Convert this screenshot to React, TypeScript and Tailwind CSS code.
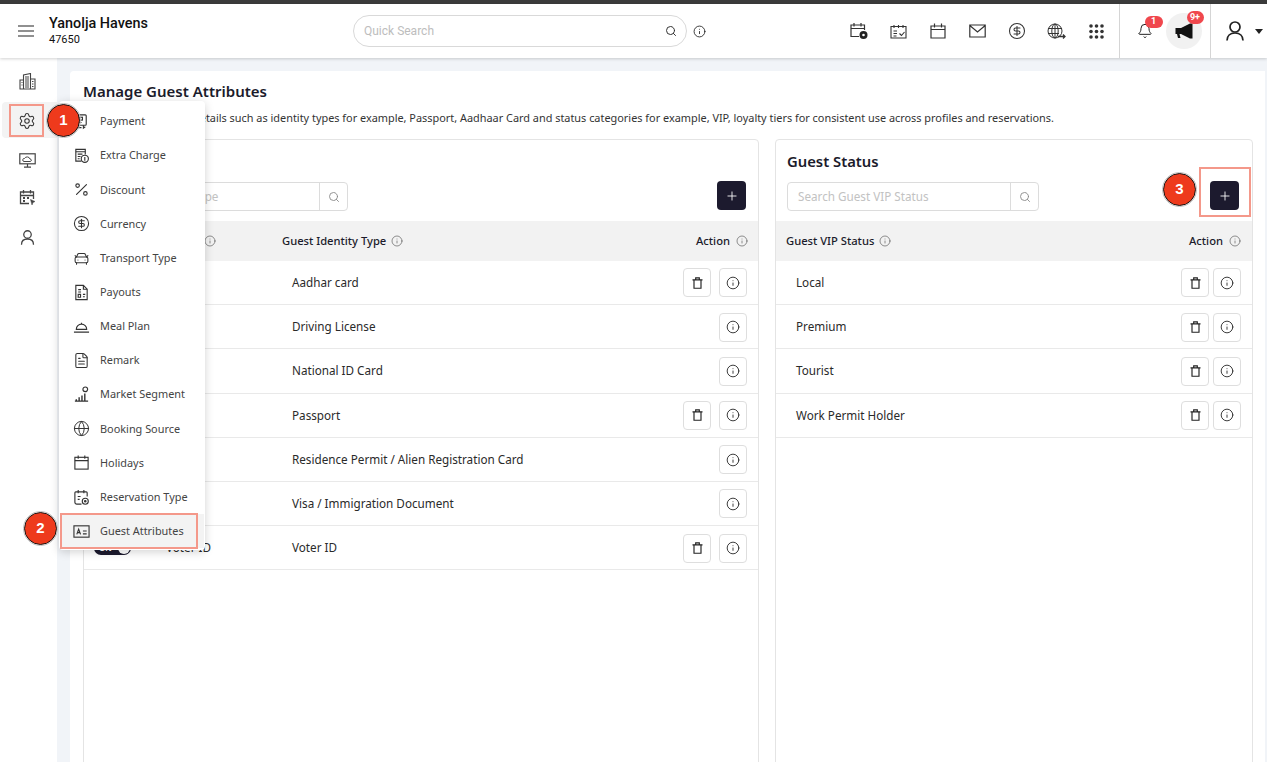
import { Search, Info, Plus, Percent, CircleDollarSign, CarFront, Globe, FileText, Settings, Bell } from "lucide-react";
import { ReactNode } from "react";

type IconProps = { size?: number };

function Svg({ size = 17, children }: IconProps & { children: ReactNode }) {
  return (
    <svg width={size} height={size} viewBox="0 0 18 18" fill="none" stroke="currentColor" strokeWidth="1.2">
      {children}
    </svg>
  );
}

const BurgerIcon = () => (
  <svg width="16" height="12" viewBox="0 0 16 12" fill="none" stroke="currentColor" strokeWidth="1.200">
    <path d="M0 1h16M0 6h16M0 11h16" />
  </svg>
);
const PaymentIcon = () => (
  <Svg>
    <rect x="4" y="2" width="10" height="11" rx="1" />
    <rect x="6.5" y="4.5" width="3.5" height="3" />
    <path d="M6 10h3M4 15.5h5M11 13v3l2-1.5" />
  </Svg>
);
const ChargeIcon = () => (
  <Svg>
    <path d="M9 15H3V2.5h10V8" />
    <path d="M3 5h10M5 7.5h5M5 10h3M5 12.5h2" />
    <circle cx="12.5" cy="12.5" r="3.8" />
    <path d="M12.5 10.5v4" />
  </Svg>
);
const PayoutsIcon = () => (
  <Svg>
    <path d="M3 1.5h8l4 4v11H3z" />
    <path d="M11 1.5v4h4M5.5 6h3M5.5 8.5h3M5.5 11h2.5v3h-2.500zM10.500 11h2.500M10.500 13.500h2" />
  </Svg>
);
const MealIcon = () => (
  <Svg>
    <path d="M3.500 12a5.500 5.500 0 0 1 11 0zM1 15h16M9 6.500V5" />
  </Svg>
);
const MarketIcon = () => (
  <Svg>
    <path d="M2 16h14M3.500 16v-2M6.500 16v-4M9.500 16v-6M12.500 16V8" strokeWidth="1.500" />
    <circle cx="13" cy="3.500" r="2.500" />
  </Svg>
);
const HolidayIcon = () => (
  <Svg>
    <rect x="2" y="3.500" width="14" height="12.500" />
    <path d="M2 7h14M5.500 1.500v3.500M12.500 1.500v3.500" />
  </Svg>
);
const ReservationIcon = () => (
  <Svg>
    <path d="M9 16H4a2 2 0 0 1-2-2V4a1 1 0 0 1 1-1h11a1 1 0 0 1 1 1v4" />
    <path d="M5.500 1v3.500M11.500 1v3.500M5 8h3M5 11h2" />
    <circle cx="13" cy="13" r="3.200" />
    <circle cx="13" cy="13" r="0.800" fill="currentColor" />
  </Svg>
);
const GuestIcon = () => (
  <Svg>
    <rect x="1" y="3" width="16" height="12" />
    <path d="M4 12l2-5.500L8 12M4.800 10.200h2.400M10.500 8.500h4M10.500 11.500h4" />
  </Svg>
);

const BuildingIcon = () => (
  <svg width="17" height="17" viewBox="0 0 17 17" fill="none" stroke="currentColor" strokeWidth="1.100">
    <path d="M4.500 16V2l7-1.500V16M1 16V7h3.500M11.500 6H16v10M0.500 16h16" />
    <path d="M6 4h4M6 6h4M6 8h4M6 10h4M6 12h4M6 14h4M2.500 9.500h1M2.500 12h1M13 8.500h1.500M13 11h1.500M13 13.500h1.500" />
  </svg>
);
const MonitorIcon = () => (
  <svg width="17" height="15" viewBox="0 0 17 15" fill="none" stroke="currentColor" strokeWidth="1.200">
    <rect x="0.800" y="0.800" width="15.400" height="10" />
    <path d="M8.500 11v3M5 14.200h7" />
    <path d="M5 8.500a1.500 1.500 0 0 1 .5-3 3 3 0 0 1 5.500 0.500 1.300 1.300 0 0 1 .5 2.500z" strokeWidth="1" />
  </svg>
);
const CalendarCursorIcon = () => (
  <svg width="17" height="17" viewBox="0 0 17 17" fill="none" stroke="currentColor" strokeWidth="1.300">
    <path d="M10 14.500H1.500V3h13v7M1.500 6.500h13M4.500 1v3.500M11.500 1v3.500" />
    <path d="M4 9h2M8 9h2M4 12h2" strokeWidth="1.800" />
    <path d="M11.500 10.500l4.500 2-2 1-1 2.500z" fill="currentColor" strokeWidth="0.500" />
  </svg>
);
const UserIcon = ({ size = 15 }: IconProps) => (
  <svg width={size} height={size} viewBox="0 0 18 20" fill="none" stroke="currentColor" strokeWidth="1.700">
    <circle cx="9" cy="6" r="5" />
    <path d="M1 19.500c0-4.500 3-7.500 8-7.500s8 3 8 7.500" />
  </svg>
);
const TrashIcon = () => (
  <svg width="11" height="12" viewBox="0 0 11 12" fill="none" stroke="currentColor" strokeWidth="1.150">
    <path d="M2 3.200v8h7v-8M0.500 2.800h10M3.700 2.800V0.900h3.600v1.900" />
  </svg>
);

const CalendarCogIcon = () => (
  <svg width="18" height="18" viewBox="0 0 18 18" fill="none" stroke="currentColor" strokeWidth="1.200">
    <path d="M9 14.500H1V3h13.500v5M1 6.500h13.500M4 1v3.500M11 1v3.500" />
    <circle cx="13.500" cy="13" r="4" fill="#222" stroke="none" />
    <circle cx="13.500" cy="13" r="1.300" fill="#fff" stroke="none" />
  </svg>
);
const CalendarListIcon = () => (
  <svg width="17" height="15" viewBox="0 0 17 15" fill="none" stroke="currentColor" strokeWidth="1.100">
    <path d="M1 2.500h15v11.500H1zM4 1v3M8.500 1v3M13 1v3M3.500 7h3.500M3.500 9.500h3.500M3.500 12h3" />
    <path d="M9.500 9.500l2 2 3-3.500" />
  </svg>
);
const CalendarPlainIcon = () => (
  <svg width="16" height="16" viewBox="0 0 16 16" fill="none" stroke="currentColor" strokeWidth="1.200">
    <path d="M1 3h14v12H1zM1 6.500h14M4.500 0.500v4M11.500 0.500v4" />
  </svg>
);
const MailIcon = () => (
  <svg width="17" height="14" viewBox="0 0 17 14" fill="none" stroke="currentColor" strokeWidth="1.200">
    <path d="M0.800 1h15.400v12H0.800zM0.800 1.500l7.700 6.500 7.700-6.500" />
  </svg>
);
const GlobeArrowIcon = () => (
  <svg width="19" height="16" viewBox="0 0 19 16" fill="none" stroke="currentColor" strokeWidth="1">
    <circle cx="8" cy="8" r="7" />
    <ellipse cx="8" cy="8" rx="3.200" ry="7" />
    <path d="M1 5.500h14M1 10.500h11M8 1v14" />
    <path d="M11 13.500h7M16 11.500l2 2-2 2" strokeWidth="1.300" />
  </svg>
);
const GripIcon = () => (
  <svg width="15" height="15" viewBox="0 0 15 15" fill="currentColor">
    {[2, 7.500, 13].map((y) => [2, 7.500, 13].map((x) => <circle key={`${x}-${y}`} cx={x} cy={y} r="1.800" />))}
  </svg>
);
const HornIcon = () => (
  <svg width="18" height="16" viewBox="0 0 18 16" fill="#111">
    <path d="M0.500 5h5.500l9-4.500h2.500v15H15L6 11H4.500l1 4H3l-1-4H0.500z" />
  </svg>
);

const MENU = [
  { label: "Payment", icon: <PaymentIcon /> },
  { label: "Extra Charge", icon: <ChargeIcon /> },
  { label: "Discount", icon: <Percent size={17} strokeWidth={1.6} /> },
  { label: "Currency", icon: <CircleDollarSign size={17} strokeWidth={1.5} /> },
  { label: "Transport Type", icon: <CarFront size={17} strokeWidth={1.5} /> },
  { label: "Payouts", icon: <PayoutsIcon /> },
  { label: "Meal Plan", icon: <MealIcon /> },
  { label: "Remark", icon: <FileText size={17} strokeWidth={1.5} /> },
  { label: "Market Segment", icon: <MarketIcon /> },
  { label: "Booking Source", icon: <Globe size={17} strokeWidth={1.4} /> },
  { label: "Holidays", icon: <HolidayIcon /> },
  { label: "Reservation Type", icon: <ReservationIcon /> },
  { label: "Guest Attributes", icon: <GuestIcon /> },
];

const IDENTITY = [
  { code: "AC", name: "Aadhar card", del: true },
  { code: "DL", name: "Driving License", del: false },
  { code: "NID", name: "National ID Card", del: false },
  { code: "PP", name: "Passport", del: true },
  { code: "RP", name: "Residence Permit / Alien Registration Card", del: false },
  { code: "Visa", name: "Visa / Immigration Document", del: false },
  { code: "Voter ID", name: "Voter ID", del: true },
];

const STATUS = ["Local", "Premium", "Tourist", "Work Permit Holder"];

function Marker({ n, className }: { n: number; className: string }) {
  return (
    <div className={`absolute z-30 flex h-[33px] w-[33px] items-center justify-center rounded-full border-[1.5px] border-[#111] bg-[#ee3a1c] font-['Liberation_Sans',sans-serif] text-[15px] font-bold text-white outline outline-1 outline-[#c4c4c4] ${className}`}>
      {n}
    </div>
  );
}

function SmallInfo() {
  return <Info size={12} strokeWidth={1.3} className="text-[#555]" />;
}

function IconBtn({ children }: { children: ReactNode }) {
  return (
    <button className="flex h-[29px] w-[28px] items-center justify-center rounded border border-[#dedede] bg-white text-[#222]">
      {children}
    </button>
  );
}

function SearchBox({ placeholder }: { placeholder: string }) {
  return (
    <div className="flex h-[29px] w-[252px] items-center rounded border border-[#dcdcdc] bg-white">
      <span className="flex-1 pl-[10px] text-[11.7px] text-[#c2c2c2]">{placeholder}</span>
      <span className="flex h-full w-[28px] items-center justify-center border-l border-[#dcdcdc] text-[#888]">
        <Search size={12} strokeWidth={1.8} />
      </span>
    </div>
  );
}

function AddBtn() {
  return (
    <button className="-mt-[2px] flex h-[29px] w-[29px] items-center justify-center rounded bg-[#1c1a2e] text-white">
      <Plus size={14} strokeWidth={1.5} />
    </button>
  );
}

export default function App() {
  return (
    <div className="relative h-[762px] w-[1267px] overflow-hidden bg-[#f1f4f8] font-['Noto_Sans',sans-serif]">
      <div className="h-1 bg-[#3b3b3b]" />
      {/* top bar */}
      <header className="relative z-10 flex h-[54px] items-center bg-white font-['Roboto',sans-serif] shadow-[0_1px_3px_rgba(0,0,0,0.18)]">
        <div className="flex w-[353px] items-center pl-[18px] text-[#222]">
          <BurgerIcon />
          <div className="ml-[15px] leading-none">
            <div className="text-[14.4px] font-medium text-[#111]">Yanolja Havens</div>
            <div className="mt-[3px] text-[11px] text-[#111]">47650</div>
          </div>
        </div>
        <div className="flex h-[32px] w-[334px] items-center justify-between rounded-full border border-[#d9d9d9] pl-[10px] pr-[9px]">
          <span className="text-[12px] text-[#bdbdbd]">Quick Search</span>
          <Search size={12} strokeWidth={2} className="text-[#333]" />
        </div>
        <Info size={13} strokeWidth={1.6} className="ml-[6px] text-[#222]" />
        <div className="ml-[133.5px] flex items-center text-[#333]">
          <div className="flex w-[39.5px] justify-center"><CalendarCogIcon /></div>
          <div className="flex w-[39.5px] justify-center"><CalendarListIcon /></div>
          <div className="flex w-[39.5px] justify-center"><CalendarPlainIcon /></div>
          <div className="flex w-[39.5px] justify-center"><MailIcon /></div>
          <div className="flex w-[39.5px] justify-center"><CircleDollarSign size={18} strokeWidth={1.4} /></div>
          <div className="flex w-[39.5px] justify-center"><GlobeArrowIcon /></div>
          <div className="flex w-[39px] justify-center"><GripIcon /></div>
        </div>
        <div className="ml-[3px] flex h-full items-center border-l border-[#d5d5d5] pl-[17px]">
          <div className="relative">
            <Bell size={16} strokeWidth={1.5} className="text-[#222]" />
            <span className="absolute -right-[10px] -top-[7px] flex h-[12px] w-[18px] items-center justify-center rounded-full bg-[#f0474d] text-[9px] font-bold text-white">1</span>
          </div>
          <div className="relative ml-[13px] flex h-[36px] w-[36px] items-center justify-center rounded-full bg-[#f1f1f1]">
            <HornIcon />
            <span className="absolute -right-[2px] -top-[2px] flex h-[13px] w-[17px] items-center justify-center rounded-full bg-[#f0474d] text-[9px] font-bold text-white">9+</span>
          </div>
        </div>
        <div className="ml-[8px] flex h-full items-center gap-[10px] border-l border-[#d5d5d5] pl-[14px]">
          <span className="text-[#222]"><UserIcon size={20} /></span>
          <span className="h-0 w-0 border-x-[4px] border-t-[5px] border-x-transparent border-t-[#222]" />
        </div>
      </header>

      <div className="flex h-[704px]">
        {/* sidebar */}
        <aside className="flex w-[57px] flex-col items-center bg-white pr-[3px] pt-[15px] text-[#444]">
          <BuildingIcon />
          <div className="-mr-[3px] ml-[2px] mt-[12px] flex h-[36px] w-[55px] items-center rounded-l bg-[#f3f3f3] pl-[7px] text-[#333]">
            <div className="mt-[1px] flex h-[33px] w-[35px] items-center justify-center border-2 border-[#f4988a]">
              <Settings size={18} strokeWidth={1.4} />
            </div>
          </div>
          <div className="mt-[15px]"><MonitorIcon /></div>
          <div className="mt-[21px]"><CalendarCursorIcon /></div>
          <div className="mt-[24px]"><UserIcon /></div>
        </aside>

        {/* page */}
        <main className="flex-1 pl-[13px] pr-[2px] pt-[13px]">
          <div className="h-full rounded-tl bg-white pl-[13px] pr-[12px] pt-[9px]">
            <h1 className="text-[15px] font-semibold leading-[23px] text-[#1b1b2b]">Manage Guest Attributes</h1>
            <p className="mt-[6px] whitespace-nowrap text-[10.9px] leading-[18px] text-[#333]">
              Configure core guest details such as identity types for example, Passport, Aadhaar Card and status categories for example, VIP, loyalty tiers for consistent use across profiles and reservations.
            </p>

            <div className="mt-[12px] flex gap-4">
              <section className="h-[700px] w-[676px] rounded border border-[#e4e4e4]">
                <div className="px-3 pt-[10px]">
                  <h2 className="text-[14.8px] font-semibold leading-[22px] text-[#1b1b2b]">Guest Identity</h2>
                  <div className="mt-[10px] flex items-center justify-between pb-[10px]">
                    <SearchBox placeholder="Search Identity Type" />
                    <AddBtn />
                  </div>
                </div>
                <div className="flex h-[40px] items-center bg-[#f2f2f2] text-[11.2px] font-medium text-[#1b1b2b]">
                  <div className="w-[72px] pl-[10px]">Status</div>
                  <div className="flex w-[126px] items-center gap-[11px] pl-[10px]">Code <SmallInfo /></div>
                  <div className="flex flex-1 items-center gap-[5px]">Guest Identity Type <SmallInfo /></div>
                  <div className="flex items-center gap-[6px] pr-[10px]">Action <SmallInfo /></div>
                </div>
                {IDENTITY.map((r) => (
                  <div key={r.name} className="flex h-[44.2px] items-center border-b border-[#e9e9e9] pt-[0.6px] text-[11.7px] text-[#2a2a2a]">
                    <div className="w-[71px] pl-[10px]">
                      <div className="flex h-[14px] w-[37px] items-center justify-between rounded-full bg-[#1c1a2e] pl-[5px] pr-[1px] text-[8px] font-bold text-white">
                        ON<span className="h-[12px] w-[12px] rounded-full bg-white" />
                      </div>
                    </div>
                    <div className="w-[126px] pl-[11px]">{r.code}</div>
                    <div className="flex-1 pl-[11px]">{r.name}</div>
                    <div className="flex items-center gap-2 pr-[11px]">
                      {r.del && <IconBtn><TrashIcon /></IconBtn>}
                      <IconBtn><Info size={14} strokeWidth={1.5} /></IconBtn>
                    </div>
                  </div>
                ))}
              </section>

              <section className="h-[700px] w-[478px] rounded border border-[#e4e4e4]">
                <div className="pl-[11px] pr-[13px] pt-[10px]">
                  <h2 className="text-[14.8px] font-semibold leading-[22px] text-[#1b1b2b]">Guest Status</h2>
                  <div className="mt-[10px] flex items-center justify-between pb-[10px]">
                    <SearchBox placeholder="Search Guest VIP Status" />
                    <AddBtn />
                  </div>
                </div>
                <div className="flex h-[40px] items-center justify-between bg-[#f2f2f2] text-[11.2px] font-medium text-[#1b1b2b]">
                  <div className="flex items-center gap-[5px] pl-[10px]">Guest VIP Status <SmallInfo /></div>
                  <div className="flex items-center gap-[6px] pr-[11px]">Action <SmallInfo /></div>
                </div>
                {STATUS.map((s) => (
                  <div key={s} className="flex h-[44.2px] items-center justify-between border-b border-[#e9e9e9] pl-[20px] pr-[11px] pt-[0.6px] text-[11.7px] text-[#2a2a2a]">
                    {s}
                    <div className="flex gap-[4px]">
                      <IconBtn><TrashIcon /></IconBtn>
                      <IconBtn><Info size={14} strokeWidth={1.5} /></IconBtn>
                    </div>
                  </div>
                ))}
              </section>
            </div>
          </div>
        </main>
      </div>

      {/* settings flyout */}
      <div className="absolute left-[59px] top-[101px] z-20 h-[449px] w-[146px] rounded bg-white shadow-[0_2px_10px_rgba(0,0,0,0.18)]">
        <ul className="pt-[3.4px]">
          {MENU.map((m) => (
            <li key={m.label} className={`mx-[1px] flex h-[34.15px] items-center gap-[10px] pl-[13px] text-[10.9px] text-[#444] ${m.label === "Guest Attributes" ? "bg-[#f3f3f3]" : ""}`}>
              <span className="text-[#333]">{m.icon}</span>
              {m.label}
            </li>
          ))}
        </ul>
      </div>

      {/* tutorial highlights */}
      <div className="absolute left-[60px] top-[513px] z-20 h-[36px] w-[138px] border-2 border-[#f4988a]" />
      <div className="absolute left-[1199px] top-[167px] z-20 h-[50px] w-[52px] border-2 border-[#f4988a]" />
      <Marker n={1} className="left-[47px] top-[104px]" />
      <Marker n={2} className="left-[24px] top-[512px]" />
      <Marker n={3} className="left-[1163px] top-[173px]" />
    </div>
  );
}
